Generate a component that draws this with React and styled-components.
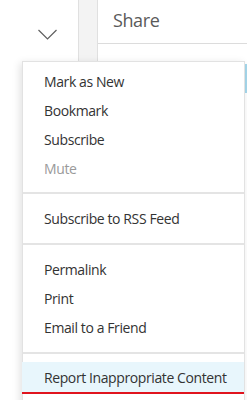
import React from 'react';
import styled, { createGlobalStyle } from 'styled-components';

const GlobalStyle = createGlobalStyle`
  html, body {
    margin: 0;
    padding: 0;
    background: #ffffff;
    font-family: "Open Sans", "Noto Sans", sans-serif;
  }
`;

const Page = styled.div`
  position: relative;
  width: 247px;
  height: 400px;
  overflow: hidden;
  display: flex;
  background: #ffffff;
`;

const ToggleCell = styled.div`
  width: 78px;
  display: flex;
  justify-content: center;
  align-items: flex-start;
  padding-top: 29px;
  padding-left: 18px;
  box-sizing: border-box;

  svg {
    display: block;
  }
`;

const Strip = styled.div`
  width: 20px;
  box-sizing: border-box;
  background: #f3f3f3;
  border-left: 1px solid #e0e0e0;
  border-right: 1px solid #e0e0e0;
`;

const SharePanel = styled.div`
  flex: 1;
  display: flex;
  flex-direction: column;
`;

const ShareHeader = styled.div`
  height: 44px;
  box-sizing: border-box;
  border-bottom: 1px solid #dcdcdc;
  padding: 6px 0 0 15px;
  font-size: 18px;
  letter-spacing: -0.4px;
  color: #5a5a5a;
  line-height: 28px;
`;

const ShareBody = styled.div`
  display: flex;
  justify-content: flex-end;
  padding-top: 20px;
`;

const AccentBlock = styled.div`
  width: 60px;
  height: 29px;
  background: #a6d8ec;
`;

const Menu = styled.div`
  position: absolute;
  left: 22px;
  top: 61px;
  width: 223px;
  height: 360px;
  box-sizing: border-box;
  background: #ffffff;
  border: 1px solid #e2e2e2;
  box-shadow: -2px 2px 8px rgba(0, 0, 0, 0.12);
`;

const Group = styled.div`
  padding: ${p => p.$pad || '10px 0'};
  border-top: ${p => (p.$first ? 'none' : '2px solid #e4e4e4')};
`;

const Item = styled.div`
  height: ${p => (p.$active ? '30px' : '29px')};
  line-height: ${p => (p.$active ? '32px' : '29px')};
  font-size: 14px;
  letter-spacing: -0.4px;
  color: ${p => (p.$muted ? '#9a9a9a' : '#333333')};
  background: ${p => (p.$active ? '#e8f6fc' : 'transparent')};
  border-bottom: ${p => (p.$active ? '2px solid #e0141e' : 'none')};
  margin-left: ${p => (p.$active ? '-1px' : '0')};
  padding-left: ${p => (p.$active ? '22px' : '21px')};
  white-space: nowrap;
`;

const Chevron = () => (
  <svg width="22" height="12" viewBox="0 0 22 12" fill="none">
    <path d="M1.5 1 L10.5 10 L19.5 1" stroke="#5f5f5f" strokeWidth="1.2" />
  </svg>
);

export default function App() {
  return (
    <>
      <GlobalStyle />
      <Page>
        <ToggleCell>
          <Chevron />
        </ToggleCell>
        <Strip />
        <SharePanel>
          <ShareHeader>Share</ShareHeader>
          <ShareBody>
            <AccentBlock />
          </ShareBody>
        </SharePanel>

        <Menu>
          <Group $first $pad="5px 0 9px">
            <Item>Mark as New</Item>
            <Item>Bookmark</Item>
            <Item>Subscribe</Item>
            <Item $muted>Mute</Item>
          </Group>
          <Group>
            <Item>Subscribe to RSS Feed</Item>
          </Group>
          <Group>
            <Item>Permalink</Item>
            <Item>Print</Item>
            <Item>Email to a Friend</Item>
          </Group>
          <Group $pad="8px 0 0">
            <Item $active>Report Inappropriate Content</Item>
          </Group>
        </Menu>
      </Page>
    </>
  );
}
